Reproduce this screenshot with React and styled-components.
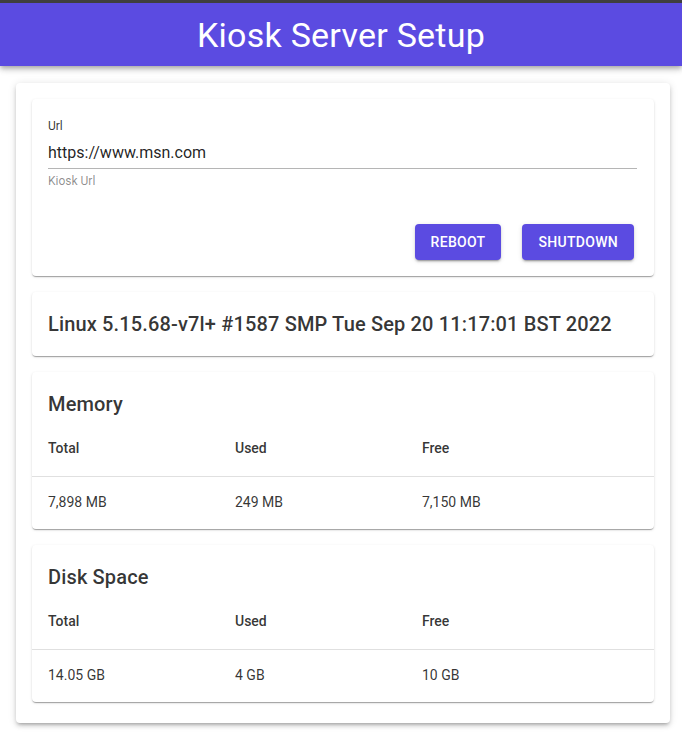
import React from 'react'
import styled, { createGlobalStyle } from 'styled-components'

const GlobalStyle = createGlobalStyle`
  html, body {
    margin: 0;
    padding: 0;
    background: #fff;
    font-family: Roboto, "Liberation Sans", Arial, sans-serif;
  }
`

const AppBar = styled.header`
  background: #5b4be1;
  border-top: 3px solid #3f3f3f;
  height: 63px;
  display: flex;
  align-items: center;
  justify-content: center;
  box-shadow: 0 2px 4px -1px rgba(0,0,0,0.2), 0 4px 5px 0 rgba(0,0,0,0.14), 0 1px 10px 0 rgba(0,0,0,0.12);
  position: relative;
  z-index: 1;
`

const Title = styled.h1`
  margin: 0;
  color: #fff;
  font-weight: 400;
  font-size: 34px;
  line-height: 1;
  letter-spacing: 0.25px;
`

const Outer = styled.main`
  margin: 17px 12px 14px 16px;
  padding: 16px 16px 21px 16px;
  background: #fff;
  border-radius: 4px;
  box-shadow: 0 3px 3px -2px rgba(0,0,0,0.2), 0 3px 4px 0 rgba(0,0,0,0.14), 0 1px 8px 0 rgba(0,0,0,0.12);
  display: flex;
  flex-direction: column;
  gap: 16px;
`

const Card = styled.section`
  background: #fff;
  border-radius: 4px;
  padding: ${p => p.$pad || '16px'};
  box-shadow: 0 2px 1px -1px rgba(0,0,0,0.2), 0 1px 1px 0 rgba(0,0,0,0.14), 0 1px 3px 0 rgba(0,0,0,0.12);
`

const Field = styled.div`
  display: flex;
  flex-direction: column;
  padding-right: 1px;
`

const Label = styled.label`
  font-size: 12px;
  line-height: 12px;
  color: rgba(0,0,0,0.8);
  margin-top: 5px;
`

const Input = styled.div`
  font-size: 16px;
  line-height: 20px;
  color: rgba(0,0,0,0.87);
  padding: 11px 0 5px;
  border-bottom: 1px solid #b5b5b5;
`

const Helper = styled.div`
  font-size: 12px;
  line-height: 12px;
  color: rgba(0,0,0,0.45);
  margin-top: 6px;
`

const Actions = styled.div`
  display: flex;
  justify-content: flex-end;
  gap: 21px;
  margin-top: 37px;
  padding-right: 4px;
`

const Button = styled.button`
  background: #5b4be1;
  color: #fff;
  border: none;
  border-radius: 4px;
  height: 36px;
  padding: 0 16px;
  font-family: inherit;
  font-weight: 500;
  font-size: 14px;
  letter-spacing: 0.3px;
  text-transform: uppercase;
  box-shadow: 0 3px 1px -2px rgba(0,0,0,0.2), 0 2px 2px 0 rgba(0,0,0,0.14), 0 1px 5px 0 rgba(0,0,0,0.12);
  cursor: pointer;
`

const Heading = styled.h2`
  margin: 0;
  padding-left: ${p => p.$indent || 0};
  font-size: 20px;
  font-weight: 500;
  line-height: 32px;
  color: rgba(0,0,0,0.8);
  letter-spacing: 0.15px;
`

const Table = styled.div`
  display: grid;
  grid-template-columns: 187px 187px 1fr;
`

const Cell = styled.div`
  font-size: 14px;
  line-height: 24px;
  color: rgba(0,0,0,0.8);
  font-weight: ${p => (p.$head ? 500 : 400)};
  padding: ${p => (p.$head ? '16px 16px 16px' : '13px 16px 15px')};
  border-bottom: ${p => (p.$head ? '1px solid #e0e0e0' : 'none')};
`

const StatCard = ({ title, total, used, free }) => (
  <Card $pad="16px 0 0 0">
    <Heading $indent="16px">{title}</Heading>
    <Table>
      <Cell $head>Total</Cell>
      <Cell $head>Used</Cell>
      <Cell $head>Free</Cell>
      <Cell>{total}</Cell>
      <Cell>{used}</Cell>
      <Cell>{free}</Cell>
    </Table>
  </Card>
)

export default function App() {
  return (
    <>
      <GlobalStyle />
      <AppBar>
        <Title>Kiosk Server Setup</Title>
      </AppBar>
      <Outer>
        <Card>
          <Field>
            <Label>Url</Label>
            <Input>https://www.msn.com</Input>
            <Helper>Kiosk Url</Helper>
          </Field>
          <Actions>
            <Button>Reboot</Button>
            <Button>Shutdown</Button>
          </Actions>
        </Card>
        <Card>
          <Heading>Linux 5.15.68-v7l+ #1587 SMP Tue Sep 20 11:17:01 BST 2022</Heading>
        </Card>
        <StatCard title="Memory" total="7,898 MB" used="249 MB" free="7,150 MB" />
        <StatCard title="Disk Space" total="14.05 GB" used="4 GB" free="10 GB" />
      </Outer>
    </>
  )
}
